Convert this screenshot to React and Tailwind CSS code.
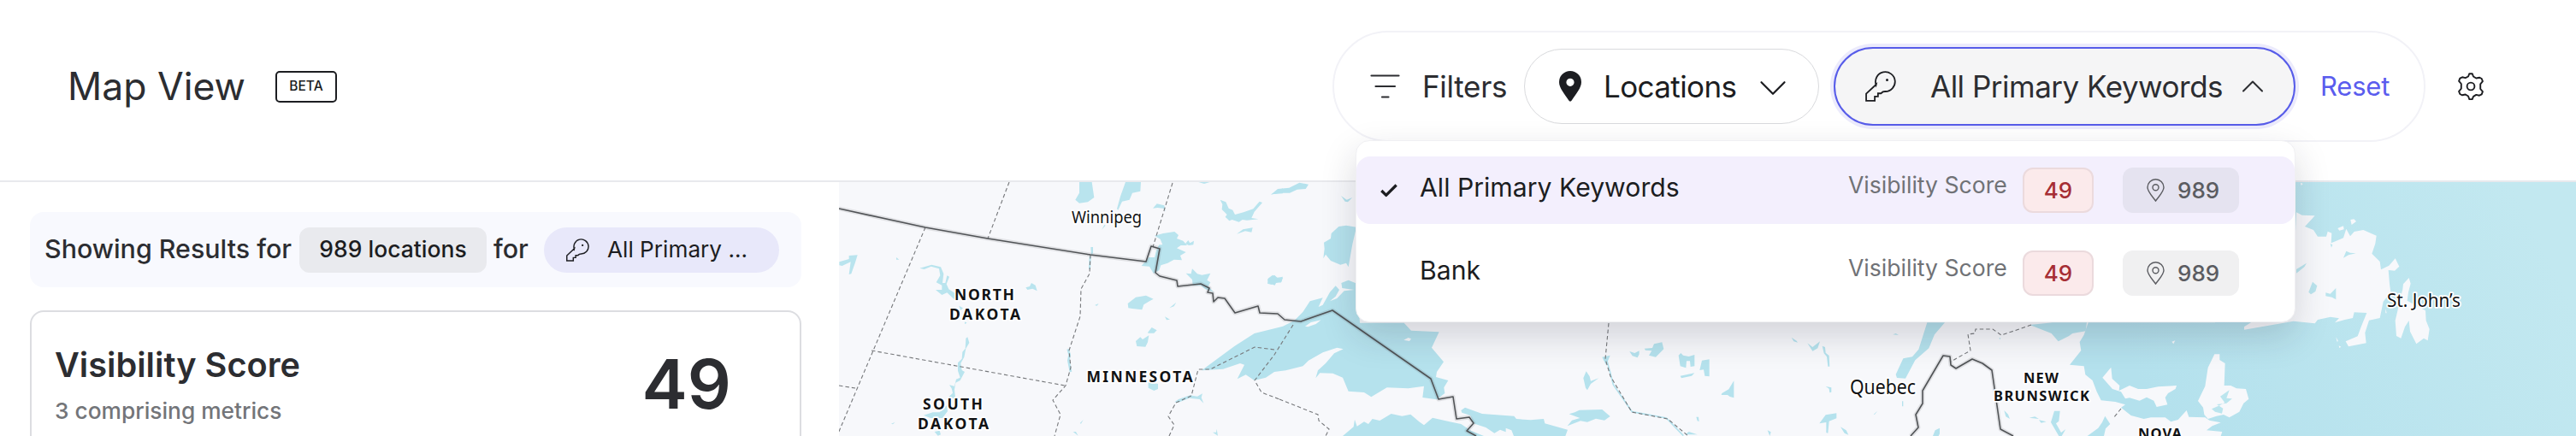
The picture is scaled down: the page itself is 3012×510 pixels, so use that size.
import { Check, ChevronDown, ChevronUp } from "lucide-react"

const keywords = [
  { name: "All Primary Keywords", score: 49, locations: 989, selected: true },
  { name: "Bank", score: 49, locations: 989, selected: false },
]

function KeyIcon({ className, strokeWidth = 1.2 }) {
  return (
    <svg className={className} viewBox="0 0 24 24" fill="none" stroke="currentColor" strokeWidth={strokeWidth}>
      <path d="M8.4 10.9A7.6 7.6 0 1 1 15.4 16l-1.7.3-1.5 1.2H9.9v2.4H7.4v3.3H.7v-5.4l7.8-7.3Z" />
      <circle cx="17" cy="7" r="1" fill="currentColor" stroke="none" />
    </svg>
  )
}

function PinOutline({ className }) {
  return (
    <svg className={className} viewBox="0 0 21 27" fill="none" stroke="currentColor" strokeWidth="1.4">
      <path d="M10.5 26C7 21 1 15.200 1 10.300a9.500 9.500 0 0 1 19 0c0 4.900-6 10.700-9.500 15.700Z" />
      <circle cx="10.500" cy="10.300" r="3.500" />
    </svg>
  )
}

function PinSolid({ className }) {
  return (
    <svg className={className} viewBox="0 0 26 36" fill="currentColor">
      <path
        fillRule="evenodd"
        d="M13 0a13 13 0 0 1 13 13c0 7-6.500 14-11.300 21.600-.9 1.500-2.500 1.500-3.400 0C6.500 27 0 20 0 13A13 13 0 0 1 13 0Zm0 8.700a4.600 4.600 0 1 0 0 9.200 4.600 4.600 0 0 0 0-9.200Z"
      />
    </svg>
  )
}

function GearIcon({ className }) {
  return (
    <svg className={className} viewBox="0 0 30 32" fill="none" stroke="currentColor" strokeWidth="1.900" strokeLinejoin="round">
      <path d="M12 4.500 13.300 1.200h3.400L18 4.500l3.300 2 3.700-.8 2.700 1.300 1.200 3.200-2.700 3.200v5.600l2.700 3.200-1.200 3.200-2.700 1.300-3.700-.8-3.300 2-1.300 3.200h-3.400L12 27.500l-3.300-2-3.700.8L2.300 25l-1.200-3.200 2.700-3.200V13L1.100 9.800l1.200-3.200L5 5.300l3.700.8Z" />
      <circle cx="15" cy="16" r="4.400" />
    </svg>
  )
}

function FilterIcon({ className }) {
  return (
    <svg className={className} viewBox="0 0 36 28" fill="none" stroke="currentColor" strokeWidth="2.200" strokeLinecap="round">
      <path d="M1.500 1.500h32M6.500 14h22.500M14 26.500h7.500" />
    </svg>
  )
}

function KeywordMenu() {
  return (
    <div className="absolute right-0 top-[109px] z-10 flex h-[213px] w-[1099px] flex-col gap-[18px] rounded-2xl border border-[#f0f0f3] bg-white pt-[18px] shadow-[0_16px_40px_rgba(30,30,50,0.17)]">
      {keywords.map((keyword) => (
        <div
          key={keyword.name}
          className={
            keyword.selected
              ? "flex h-[79px] shrink-0 items-center rounded-2xl bg-[#f3effd] pl-[25px]"
              : "flex h-[79px] shrink-0 items-center rounded-2xl pl-[25px]"
          }
        >
          <div className="w-[49px] shrink-0">
            {keyword.selected && <Check className="size-[26px] text-[#1c1d21]" strokeWidth={3} strokeLinecap="butt" />}
          </div>
          <span className="w-[501px] pb-[8px] text-[30.200px] leading-10 text-[#1c1d21]">{keyword.name}</span>
          <span className="w-[204px] pb-[14px] text-[26.600px] leading-8 text-[#707276]">Visibility Score</span>
          <span className="mr-[34px] flex h-[53px] w-[83px] items-center justify-center rounded-xl border-2 border-[#ebdadd] bg-[#fbeaeb] text-[26px] font-medium text-[#a62e35]">
            {keyword.score}
          </span>
          <span
            className={
              keyword.selected
                ? "flex h-[53px] w-[136px] items-center rounded-xl bg-[#e5e3f0] pl-[28px] text-[26px] font-medium text-[#5b5c61]"
                : "flex h-[53px] w-[136px] items-center rounded-xl bg-[#f0f0f1] pl-[28px] text-[26px] font-medium text-[#5b5c61]"
            }
          >
            <PinOutline className="mr-[15px] h-[27px] w-[21px]" />
            {keyword.locations}
          </span>
        </div>
      ))}
    </div>
  )
}

function Toolbar() {
  return (
    <div className="ml-auto flex h-[130px] w-[1278px] items-center rounded-full border-2 border-[#f2f2f7] pl-[42px]">
      <button className="flex w-[180px] shrink-0 items-center text-[35px] tracking-[-0.3px] text-[#2c2d31]">
        <FilterIcon className="mr-[25px] h-[28px] w-[36px]" />
        Filters
      </button>
      <button className="flex h-[88px] w-[345px] shrink-0 items-center rounded-full border border-[#d9dadd] pl-[40px] text-[35px] tracking-[-0.6px] text-[#1c1d21]">
        <PinSolid className="mr-[26px] h-[36px] w-[26px]" />
        <span className="w-[171px] text-left">Locations</span>
        <ChevronDown className="mt-[4px] size-[54px]" strokeWidth={1} />
      </button>
      <div className="relative ml-[17px] shrink-0">
        <button className="flex h-[92px] w-[540px] items-center rounded-full border-2 border-[#575ce9] bg-[#f5f5f6] pl-[35px] text-[35px] tracking-[-0.5px] text-[#2c2d31] ring-4 ring-[#ecebfc]">
          <KeyIcon className="mr-[40px] size-[36px] text-[#1c1d21]" />
          <span className="w-[355px] whitespace-nowrap text-left">All Primary Keywords</span>
          <ChevronUp className="size-[44px]" strokeWidth={1.1} />
        </button>
        <KeywordMenu />
      </div>
      <button className="ml-[29px] text-[31px] tracking-[-0.2px] text-[#5a5cee]">Reset</button>
    </div>
  )
}

function Sidebar() {
  return (
    <aside className="flex w-[981px] shrink-0 flex-col gap-[27px] pl-[35px] pt-[35px]">
      <div className="flex h-[88px] w-[902px] shrink-0 items-center rounded-2xl bg-[#f8f9fe] pl-[17px] text-[30.400px] font-medium text-[#2c2d31]">
        <span className="w-[298px] whitespace-nowrap">Showing Results for</span>
        <span className="flex h-[53px] w-[219px] items-center justify-center rounded-xl bg-[#e9eaee] text-[26.500px] text-[#1c1d21]">
          989 locations
        </span>
        <span className="w-[67px] pl-[8px]">for</span>
        <span className="flex h-[53px] w-[275px] items-center rounded-full bg-[#e8e8fa] pl-[26px] text-[26.200px] font-normal text-[#1c1d21]">
          <KeyIcon className="mr-[21px] size-[27px]" strokeWidth={1.3} />
          All Primary ...
        </span>
      </div>
      <div className="flex h-[300px] w-[902px] shrink-0 justify-between rounded-2xl border-2 border-[#dcdde1] pl-[27px] pr-[80px] pt-[38px]">
        <div>
          <h2 className="text-[39.700px] font-semibold leading-[48px] text-[#2c2d31]">Visibility Score</h2>
          <p className="mt-[14px] text-[26.300px] font-medium leading-8 text-[#737579]">3 comprising metrics</p>
        </div>
        <span className="mt-[6px] text-[80px] font-semibold leading-[80px] text-[#2c2d31]">49</span>
      </div>
    </aside>
  )
}

const stateLabels = [
  { text: "NORTH", x: 1116, y: 351, width: 68 },
  { text: "DAKOTA", x: 1110, y: 374, width: 81 },
  { text: "SOUTH", x: 1079, y: 479, width: 68 },
  { text: "DAKOTA", x: 1073, y: 502, width: 81 },
  { text: "MINNESOTA", x: 1270.500, y: 447, width: 122 },
  { text: "NEW", x: 2366, y: 448, width: 39, size: 16.500 },
  { text: "BRUNSWICK", x: 2331, y: 469, width: 110, size: 16.500 },
  { text: "NOVA", x: 2500, y: 513, width: 49, size: 16.500 },
]

const cityLabels = [
  { text: "Winnipeg", x: 1253, y: 261, width: 82, size: 20.500 },
  { text: "Quebec", x: 2163, y: 460.500, width: 77, size: 24 },
  { text: "St. John’s", x: 2791, y: 359, width: 86, size: 21 },
]

function RegionMap() {
  return (
    <svg className="h-[297px] w-[2031px] shrink-0 bg-[#f7f8fb]" viewBox="981 213 2031 297">
      <defs>
        <linearGradient id="sea" gradientUnits="userSpaceOnUse" x1="-200" y1="900" x2="1560" y2="24">
          <stop offset="0.15" stopColor="#b4e1ed" />
          <stop offset="0.9" stopColor="#c2e8f0" />
        </linearGradient>
      </defs>

      {/* prairies and minnesota */}
      <g transform="translate(980 205) scale(0.33333)">
        <g fill="#b9e4ee">
          <path d="M846 24h44l8 54-22 16-30 4-14-12 14-24Z" />
          <path d="m1008 24h54l-2 32-28 6-10 24-26 6-14 30-4-4 12-44Z" />
          <path d="m1104 116 14-16 26 6 4 20-8-10-20-2Z" />
          <path d="m1340 86 20 8 10 22 14 6 8 16 30-8 34-12 22-26 10 4-28 32-10 22 24 4-40 4-16-2-12 8-24-8-10 4-14-14 6-8-18-18 2-18Z" />
          <path d="m1398 206 22-16 34-6-4 16-22-4Z" />
          <path d="m1520 66 40-20v18l-28 2ZM1264 24h40l-20 6Z" />
          <path d="m1110 212 30-8 40-6 14 12-6 12 22 8 14 16-22 0-14 10 32 14-20 12 6 16-28-2-22 12-24 8-6 18-20 10-14-24-28-2 26-30 20 0 6-24 10-20 12 0-8-20Z" />
          <path d="m1228 228 6 10 14-8-2 14-16 2-12-6Z" />
          <path d="m1220 344 18 2 4-18 18 18 16 4 30-6-12 24 12 8-8 14 20 20-30-10-16-14-28 0-2-20Z" />
          <path d="m1508 362 16-12 12 10 24-4-6 20-20-2-14 10-14-4Z" />
          <path d="m1016 450 28-22 36-6 26 12-14 8-20 12-6 18-34-4-14-2Z" />
          <path d="m1086 552 14-18 18 10-10 10-20 0Zm-42 30 16-14 8 8 22-14-4 24-8 16-30-2Z" />
          <path d="m1088 726 34 6 0 18-14 6-20-10Z" />
          <path d="m1162 466 24-20-8 14ZM1146 496l18 10-12 2ZM900 456l14-6-6 8ZM204 288l10 8-10 0ZM186 872l14-6-8 8ZM848 870l12-12-8 14Z" />
          <path d="m658 394 14-4 6-12 14 8 6 20-16-8-18 4Z" />
          <path d="m4 304 34-10 0-12 30-2-8 26-14 40-8 2 6-44-30 14-10-2Z" />
          <path d="m424 458 14 8-8 8Zm20 56 8 4-8 4ZM886 252l8 0 0 20-6 10Z" />
          <path d="m924 192 10-18 4 2Z" />
          <path d="m342 402 22 0 0-16-20-10 14-24-4-24-28-8-24 10-16-4 42-12 32 8 10 24-4 32 10 0 6-26 8 4-10 26 8 18 28 18 10 12-20 4-24-22-18 8Z" />
          <path d="m448 572 6-4 6 20-12 20-6 30-12 22 4 24 10 6-16 30-16 8-4 24 4 36-14-8-12 0 16-16-4-16-8-12 18 4 6-24 14-6-8-24 0-28 14-14 2-24 10-12Z" />
          <path d="m380 808 4 20-18 24-42 0-24-10 32-10 24 0ZM338 900l18-4 4 14-10 4ZM824 900l10 0 8 14ZM1314 902l12 0 2-12 4 24Z" />
          <path d="m1180 796 14-10 40-14 26 4 18-10-4 14 8 20-14-14-36-4-40 16Z" />
        </g>
        <path d="m806 610 6 20-4 20 8 40" fill="none" stroke="#b9e4ee" strokeWidth="8" />
        <path d="M884 285 882 330" fill="none" stroke="#b9e4ee" strokeWidth="6" />
      </g>

      {/* great lakes and ontario */}
      <g transform="translate(1480 205) scale(0.33333)">
        <g fill="#b5e2ed">
          <path d="m18 68 24-20 40-4 36-18 32 6-10 16-30 2-26 12-38 0Z" />
          <path d="m264 72 20 14 20-8-16 16-10-2Z" />
          <path d="m204 236 24-14 2-18 26-24 26-4 36 6-14 60-14 80-8-14-20 6-34-14-18-22-8 14 4-34Z" />
          <path d="m6 366 24-16 14 12 16-2-6 16-18 2-4 8-18-6Z" />
          <path d="M-225 685-110 600-40 555 60 530 100 510 130 480 155 442 200 430 185 462 200 455 225 410 245 388 258 402 245 425 225 442 250 432 275 406 310 402 268 396 265 378 290 368 320 380 330 518 485 518 510 545 608 550 582 605 624 655 600 690 597 708 640 720 625 745 628 765 600 787 550 780 555 740 500 748 425 745 400 760 370 778 345 762 290 758 270 710 235 695 190 694 175 712 183 685 210 660 240 625 272 610 250 605 200 622 150 650 130 670 70 685 30 690 0 710-40 720-70 700-100 715-75 665-90 660-150 680Z" />
          <path d="m270 915 38-32 4-26 8 24 25-16 15 8 14-18 26 6 40-24 38 8 30-6 30 26 17 12 30-26 60 14 40 8 36 24 44 18Z" />
          <path d="m685 825 14-10 60 22 112 8 8 10 50 4 46-4 4 16 80 22-8 22H870l-8-20-20-8 0 14-20-8-20 12-30-20-44-14-10-28-30-10Z" />
          <path d="m1064 838 20-6 16-8 80-2 28 24-20 14-30-6-30 12-24-4-46 18 16-20 28-8Z" />
          <path d="m1114 712 10-24 12 18 4 16 28-10-28 20-12 22-6-8Z" />
          <path d="m1276 618 18 6 16-8 0 12-6 12-18-6Zm52-10 28-2 6-14 28-6 6 24-20 20-8 8-24-6 10-16-22-2Z" />
          <path d="m1448 632 8-8 8 8 20 4 20-6 0 40-14 2-2-20-12 0-2 24-20-6Zm6 72 50-10-10 10-36 8ZM1530 650l26-4v60l-16-2-4-22-14 2Z" />
          <path d="m1180 638 28-6-8 20-6 14ZM1510 848l8 0 2 16-6-2ZM1470 910l14-10 30 10Z" />
        </g>
        <path d="m1195 645 14 50 10 40 66 95 120 22 60 62" fill="none" stroke="#b5e2ed" strokeWidth="5" />
        <path d="m484 578 16-8 10 4-6 8ZM138 530l20-14 36-8-18 14-28 10Z" fill="#f7f8fb" />
      </g>

      {/* atlantic */}
      <g transform="translate(2490 205) scale(0.33333)">
        <path
          d="M-145 517-160 560-175 585-170 615-210 665-160 670-155 700-130 720-115 760-100 790-50 795-15 805-30 815 5 843 50 855 75 850 125 850 145 865 170 858 200 825 208 848 265 850 280 860 320 868 290 880 270 895 325 900 320 915H1566V24H300V517Z"
          fill="url(#sea)"
        />
        <g fill="#f7f8fb">
          <path d="m-95 710 30-36 4 40 26 24-2 18 37-18 30 12 30 0 40-8 65-4-4 12-26 15-10 15 8 25-38 8-10-22-25-12-25 12-35-10-15 3-15-24-30-10Z" />
          <path d="m298 628 18 0 0 20 19 12-3 78 23 0 20 10 33 2 10 35-18 15-15 30-35 20-20-10-25 5-30 10-13-15-4-25-18-23 25-52 10-65Z" />
          <path d="m585 130 20 10 45 2-35 38 30 12 15 23 30 0 5-18 14 6-2 35 15-6 28-12 10-32 14 26 14-16 32-6 46 20-4 28-12 35 28 28 4 28 28-14 22-25 14 28-16 15-22-2 4 48 4 30-26 32-12 58-38 8-14 44 4 36-62 12-10-18 42-18 14-38 18-44-44-2-5 20-28 6-35 10 15-15-30-5-45 10-10 13-75-8-173 30 0-10 170-110Z" />
          <path d="m958 400 2-18 20-22 6 20-8 30-4 30 64 35 2 35 12 30-6 40-14-8-26 20-22-44-4-38-14 22-14 40-16-8-4-54Z" />
          <path d="m775 156 12-2 8 8-16 12ZM730 186l20-8 2 12-16 4ZM724 568l8 14-4 2ZM734 598l8 4-6 4ZM148 584l12-4-6 12ZM600 26l8 4-6 6ZM898 468l4 16-4 0Z" />
        </g>
        <g fill="#bbe5ee">
          <path d="m750 290 10-24 14 6 20 2-26 6ZM585 330l36-22-8 14-28 22ZM628 410l14-36 16 14-6 20-16 10ZM688 412l16 4 20-20 0 40-14-8-22-4ZM704 240l8 4-4 10Z" />
          <path d="m318 776 32-22-10 28 20 2-20 16-34 4 22 14-4 18-24-6-12-10 28-12 18-10Z" />
        </g>
      </g>

      {/* quebec and new brunswick */}
      <g transform="translate(2000 360) scale(0.33333)">
        <g fill="#b5e2ed">
          <path d="M760 52h62l-36 42-20 48-30 26-18 16-34 64-30-2-4-12 26-56 32-6 22-26 22Z" />
          <path d="m1120 60 80-8h120l-4 30-46 8-14 10-36 18-24-28Z" />
          <path d="m1322 450 38-28 14-20 10-22 18 28-16 16-6 26ZM780 450l8-20 16-8 0 20-4 8Z" />
          <path d="m1206 362 20 0-4 36-10 8 18 32 16-12-14 24h-10l-28-48ZM1118 386l20-4 14 8ZM1152 394l26 6-18 4ZM1030 360l14 14 6 16-14-8Z" />
          <path d="m40 300 24-14 18-30 0 60-14-4-8-6-22 0ZM382 406l22-30 38-6 0 18-26 10-4 42-6-2 0-36ZM456 418l20 12 8 16-14-6ZM284 104l18 12 4 6-14-4ZM340 124l18 14 26-20-8 24-18 10ZM392 134l10 4 2 20 12 10 2 38-6 0-4-34-10-12ZM640 94l10-4 10 6ZM672 328l4 0 0 18-4 0ZM572 374l14-12-10 12ZM404 276l20 4 0 16-6 2-2-14ZM200 430l12 6-4 14ZM1012 106l6 0-2 6Z" />
        </g>
      </g>

      {/* province and state lines */}
      <g fill="none" stroke="#76787b" strokeWidth="1.100" strokeDasharray="4.500 3">
        <path d="M1180 213 1155 279M1371 214 1348 289M1082 266 980 507" />
        <path d="M1019 410 1245 451M981 451 1000 454" />
        <path d="M1275 298 1274 320 1264 338 1263 370 1250 410 1252 430 1246 451 1231 468 1240 485 1233 510" />
        <path d="M1512 380 1490 415 1467 445 1475 459 1496 467M1490 409 1467 406 1415 432 1401 432 1393 463 1375 471 1366 487 1373 497 1367 510" />
        <path d="M1496 467 1541 485 1542 492 1554 502 1550 510" />
        <path d="M1881 378 1877 420 1883 440 1908 482 1950 490 1974 510" />
        <path d="M2375 380 2352 388 2340 392 2330 385 2310 385 2309 390 2301 391 2304 410 2281 423M2480 478 2471 489" />
      </g>

      {/* international border */}
      <g fill="none" strokeLinejoin="round">
        <g stroke="#55585b" strokeOpacity="0.14" strokeWidth="5">
          <path d="M981 244 1082 266 1155 279 1275 298 1340 306 1346 288 1356 291 1351 319 1356 323 1376 328 1377 335 1404 332 1414 337 1412 342 1418 343 1419 353 1424 348 1432 349 1444 366 1471 358 1473 366 1494 367 1502 374 1521 376 1558 363 1673 443 1682 467 1699 464 1703 490 1718 488 1723 495 1715 504 1726 510" />
          <path d="M2234 510 2243 500 2240 485 2248 472 2248 457 2272 416 2280 417 2281 427 2287 431 2306 420 2318 425 2329 433 2339 502 2354 510" />
        </g>
        <g stroke="#505356" strokeWidth="1.600">
          <path d="M981 244 1082 266 1155 279 1275 298 1340 306 1346 288 1356 291 1351 319 1356 323 1376 328 1377 335 1404 332 1414 337 1412 342 1418 343 1419 353 1424 348 1432 349 1444 366 1471 358 1473 366 1494 367 1502 374 1521 376 1558 363 1673 443 1682 467 1699 464 1703 490 1718 488 1723 495 1715 504 1726 510" />
          <path d="M2234 510 2243 500 2240 485 2248 472 2248 457 2272 416 2280 417 2281 427 2287 431 2306 420 2318 425 2329 433 2339 502 2354 510" />
        </g>
      </g>

      <g fill="#111214" stroke="#ffffff" strokeWidth="3.500" strokeLinejoin="round" paintOrder="stroke">
        {stateLabels.map(({ text, x, y, width, size = 17.500 }) => (
          <text key={text + x} x={x} y={y} fontSize={size} textLength={width + 2} className="font-['Noto_Sans',sans-serif] font-bold">
            {text}
          </text>
        ))}
        {cityLabels.map(({ text, x, y, width, size }) => (
          <text
            key={text}
            x={x}
            y={y}
            fontSize={size}
            textLength={width}
            lengthAdjust="spacingAndGlyphs"
            className="font-['Noto_Sans',sans-serif]"
          >
            {text}
          </text>
        ))}
      </g>
    </svg>
  )
}

export default function App() {
  return (
    <div className="h-[510px] w-[3012px] overflow-hidden bg-white font-['Inter',sans-serif]">
      <header className="flex h-[213px] items-center border-b-2 border-[#e8e9ed] pb-[9px] pl-[79px] pr-[108px]">
        <h1 className="w-[208px] whitespace-nowrap text-[44.500px] text-[#2c2d31]">Map View</h1>
        <span className="ml-[35px] flex h-[37px] w-[72px] items-center justify-center rounded-[5px] border-2 border-[#1c1d21] text-[15.500px] font-medium text-[#1c1d21]">
          BETA
        </span>
        <Toolbar />
        <GearIcon className="ml-[38px] h-[32px] w-[30px] text-[#1c1d21]" />
      </header>
      <main className="flex h-[297px]">
        <Sidebar />
        <RegionMap />
      </main>
    </div>
  )
}
